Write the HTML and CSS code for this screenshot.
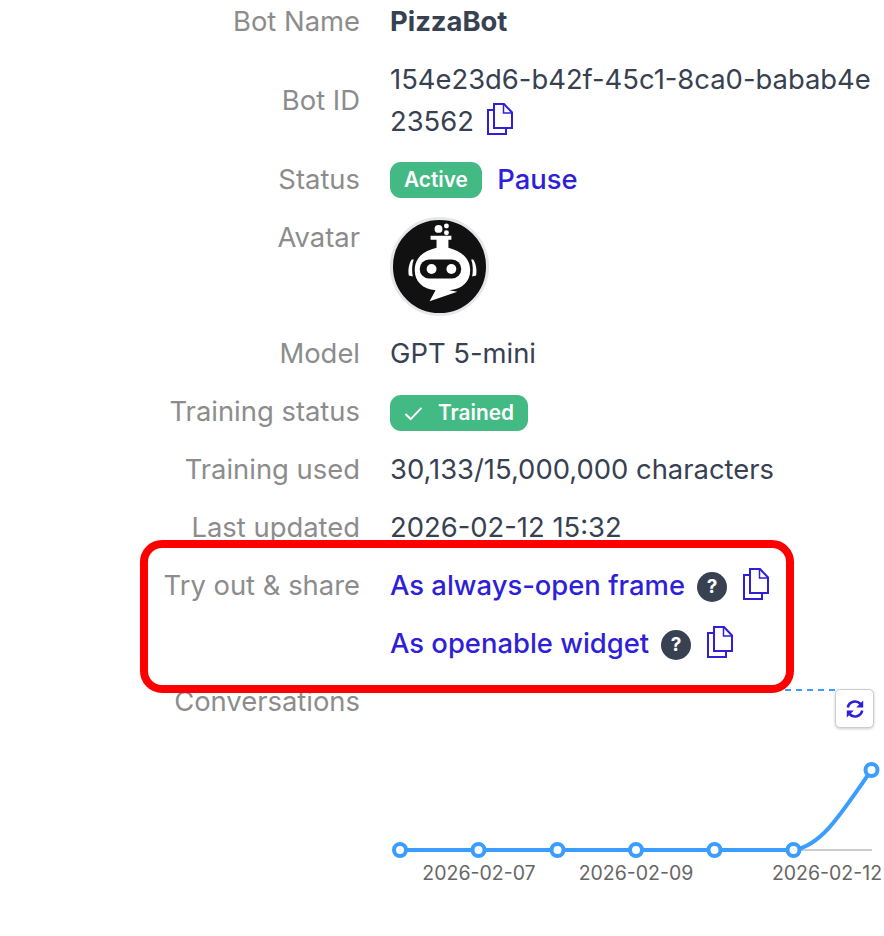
FILE: index.html
```html
<!DOCTYPE html>
<html lang="en">
<head>
  <meta charset="UTF-8">
  <meta name="viewport" content="width=device-width, initial-scale=1.0">
  <title>PizzaBot</title>
  <link rel="stylesheet" href="styles.css">
</head>
<body>
  <div class="details">
    <div class="label">Bot Name</div>
    <div class="value name">PizzaBot</div>

    <div class="label center">Bot ID</div>
    <div class="value id">154e23d6-b42f-45c1-8ca0-babab4e23562
      <svg class="copy" viewBox="0 0 26 32"><use href="#copy-icon"/></svg>
    </div>

    <div class="label">Status</div>
    <div class="value row">
      <span class="badge active">Active</span>
      <a class="link medium" href="#">Pause</a>
    </div>

    <div class="label">Avatar</div>
    <div class="value avatar-cell">
      <svg class="avatar" viewBox="0 0 100 100">
        <circle cx="50" cy="50" r="48.500" fill="#111" stroke="#e5e7eb" stroke-width="3"/>
        <circle cx="49" cy="12" r="4" fill="#fff"/>
        <circle cx="57" cy="9" r="2.500" fill="#fff"/>
        <circle cx="57" cy="16" r="2.500" fill="#fff"/>
        <path d="M41 19h21v4h-3v8c12 3 22 10 22 23c0 11-8 19-21 20l8 1.500-28 9.500 6-11c-13-1-21-9-21-20c0-13 9-20 22-23v-8h-6z" fill="#fff"/>
        <path d="M22 43c-3 4-4 11-3 16l4 1c-1-5-1-12 1-17zM84 43c3 4 4 11 3 16l-4 1c1-5 1-12-1-17z" fill="#fff"/>
        <rect x="30" y="43" width="42" height="19" rx="9.500" fill="#111"/>
        <circle cx="42" cy="52.500" r="5" fill="#fff"/>
        <circle cx="62" cy="52.500" r="5" fill="#fff"/>
      </svg>
    </div>

    <div class="label">Model</div>
    <div class="value">GPT 5-mini</div>

    <div class="label">Training status</div>
    <div class="value row">
      <span class="badge trained">
        <svg class="check" viewBox="0 0 20 16"><path d="M1.500 8.500l5.500 5.500L18.500 2"/></svg>
        Trained
      </span>
    </div>

    <div class="label">Training used</div>
    <div class="value">30,133/15,000,000 characters</div>

    <div class="label">Last updated</div>
    <div class="value">2026-02-12 15:32</div>

    <div class="label">Try out &amp; share</div>
    <div class="value row">
      <a class="link medium" href="#">As always-open frame</a>
      <span class="help">?</span>
      <svg class="copy" viewBox="0 0 26 32"><use href="#copy-icon"/></svg>
    </div>

    <div class="label"></div>
    <div class="value row">
      <a class="link medium" href="#">As openable widget</a>
      <span class="help">?</span>
      <svg class="copy" viewBox="0 0 26 32"><use href="#copy-icon"/></svg>
    </div>

    <div class="label">Conversations</div>
    <div class="value chart">
      <button class="refresh">
        <svg viewBox="0 0 20 20"><path d="M2.800 8.500A7.400 7.400 0 0 1 15.500 5M17.200 11.500A7.400 7.400 0 0 1 4.500 15"/><path class="fill" d="M18.200 1.500v7h-7zM1.800 18.500v-7h7z"/></svg>
      </button>
      <svg class="plot" width="494" height="220">
        <line class="dashed" x1="10" y1="9" x2="482" y2="9"/>
        <line class="axis" x1="10" y1="169" x2="482" y2="169"/>
        <path class="curve" d="M10 169H403.500C430 165 448 138 481.500 89"/>
        <circle class="dot" cx="10" cy="169" r="6"/>
        <circle class="dot" cx="88.500" cy="169" r="6"/>
        <circle class="dot" cx="167.500" cy="169" r="6"/>
        <circle class="dot" cx="246" cy="169" r="6"/>
        <circle class="dot" cx="324.500" cy="169" r="6"/>
        <circle class="dot" cx="403.500" cy="169" r="6"/>
        <circle class="dot" cx="481.500" cy="89" r="6"/>
        <text x="89" y="199">2026-02-07</text>
        <text x="246" y="199">2026-02-09</text>
        <text x="437" y="199">2026-02-12</text>
      </svg>
    </div>
  </div>

  <div class="highlight"></div>

  <svg class="defs" width="0" height="0">
    <symbol id="copy-icon" viewBox="0 0 26 32">
      <path d="M7 1H17L25 9.500V25H7ZM7 7H1V31H19V25" fill="none" stroke="currentColor" stroke-width="2"/>
      <path d="M16.500 1V10H25" fill="none" stroke="currentColor" stroke-width="1.500"/>
    </symbol>
  </svg>
</body>
</html>
```

FILE: styles.css
```css
body { margin: 0; background: #fff; font-family: Inter, sans-serif; font-size: 27.400px; line-height: 41px; color: #374151; position: relative; height: 936px; overflow: hidden; }
.details { display: grid; grid-template-columns: 360px 484px; column-gap: 30px; row-gap: 17px; padding-top: 1px; }
.label { text-align: right; color: #8c8c8c; }
.label.center { align-self: center; }
.value { min-width: 0; }
.name { font-weight: 700; }
.id { word-break: break-all; line-height: 41.500px; }
.row { display: flex; align-items: center; }
.link { color: #2f1fd8; text-decoration: none; }
.link.medium { font-weight: 500; }
.badge { background: #43b983; color: #fff; font-size: 20.800px; font-weight: 600; line-height: 36px; padding: 0 14px; border-radius: 11px; display: inline-flex; align-items: center; }
.active { margin-right: 15.500px; }
.trained { margin-top: 3px; }
.check { width: 19px; height: 15px; margin-right: 15px; fill: none; stroke: #fff; stroke-width: 2.200; }
.copy { width: 26px; height: 32px; color: #2f1fd8; vertical-align: -4px; margin-left: 5px; }
.row .copy { margin-left: 16px; margin-top: -4px; }
.help { width: 30px; height: 30px; border-radius: 50%; background: #374151; color: #fff; font-size: 19px; font-weight: 700; line-height: 30px; text-align: center; margin: 3px 0 0 12px; }
.avatar-cell { height: 99px; }
.avatar { width: 99px; height: 99px; display: block; }
.chart { position: relative; height: 220px; }
.plot { display: block; overflow: hidden; }
.plot text { font-size: 19.500px; fill: #666; text-anchor: middle; }
.dashed { stroke: #3b9dff; stroke-width: 2; stroke-dasharray: 6 5; }
.axis { stroke: #ccc; stroke-width: 2; }
.curve { fill: none; stroke: #3b9dff; stroke-width: 4; }
.dot { fill: #fff; stroke: #3b9dff; stroke-width: 4; }
.refresh { position: absolute; top: 8px; right: 0; width: 39px; height: 39px; padding: 0; background: #fff; border: 1px solid #ccc; border-radius: 5px; box-shadow: 0 1px 3px rgba(0,0,0,0.2); display: flex; align-items: center; justify-content: center; z-index: 1; }
.refresh svg { width: 20px; height: 20px; fill: none; stroke: #2f1fd8; stroke-width: 2.600; }
.refresh .fill { fill: #2f1fd8; stroke: none; }
.highlight { position: absolute; left: 140px; top: 540px; width: 654px; height: 153px; box-sizing: border-box; border: 8px solid #f00; border-radius: 22px; }
.defs { position: absolute; }
```
